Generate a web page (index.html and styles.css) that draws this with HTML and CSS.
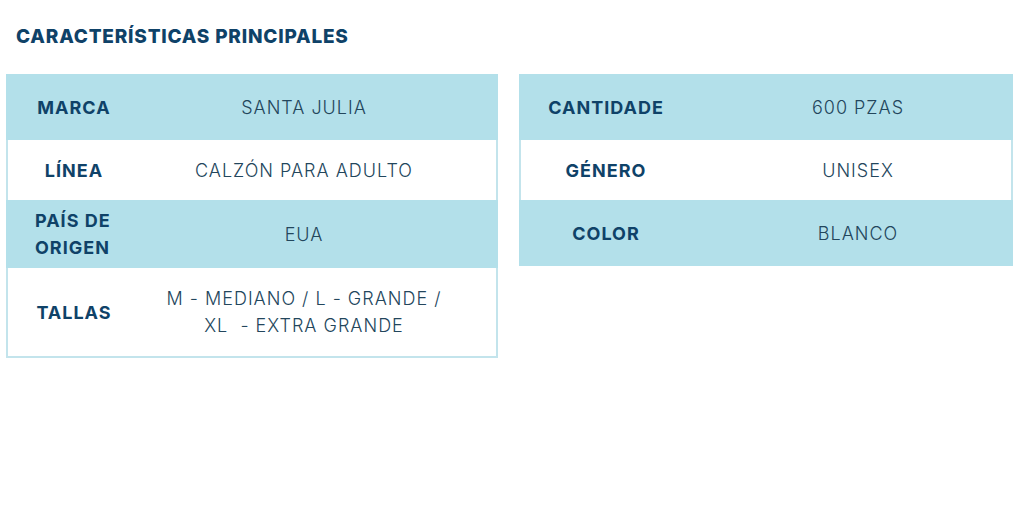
FILE: index.html
```html
<!DOCTYPE html>
<html lang="es">
<head>
<meta charset="utf-8">
<link rel="stylesheet" href="styles.css">
</head>
<body>
<div class="page">
  <h1 class="title">CARACTERÍSTICAS PRINCIPALES</h1>
  <div class="tables">
    <div class="spec spec-left">
      <div class="row blue r1"><div class="label">MARCA</div><div class="value">SANTA JULIA</div></div>
      <div class="row r2"><div class="label">LÍNEA</div><div class="value">CALZÓN PARA ADULTO</div></div>
      <div class="row blue r3"><div class="label label-left">PAÍS DE<br>ORIGEN</div><div class="value">EUA</div></div>
      <div class="row r4"><div class="label">TALLAS</div><div class="value">M - MEDIANO / L - GRANDE /<br>XL &nbsp;- EXTRA GRANDE</div></div>
    </div>
    <div class="spec spec-right">
      <div class="row blue r1"><div class="label">CANTIDADE</div><div class="value">600 PZAS</div></div>
      <div class="row r2"><div class="label">GÉNERO</div><div class="value">UNISEX</div></div>
      <div class="row blue r3b"><div class="label">COLOR</div><div class="value">BLANCO</div></div>
    </div>
  </div>
</div>
</body>
</html>
```

FILE: styles.css
```css
html, body {
  margin: 0;
  padding: 0;
  background: #ffffff;
}
body {
  font-family: "Inter", "DejaVu Sans", sans-serif;
  width: 1024px;
  height: 512px;
  overflow: hidden;
}
.page {
  padding: 26px 0 0 0;
}
.title {
  margin: 0 0 0 16px;
  font-size: 19px;
  line-height: 22px;
  font-weight: 800;
  letter-spacing: 0.8px;
  color: #0f4268;
}
.tables {
  display: flex;
  align-items: flex-start;
  gap: 21px;
  margin: 26px 0 0 6px;
}
.spec {
  border: 2px solid #c3e4ec;
  border-top: none;
  display: flex;
  flex-direction: column;
}
.spec-left { width: 488px; }
.spec-right { width: 490px; border-bottom: none; }
.row {
  display: grid;
  align-items: center;
  line-height: 27px;
  font-size: 18px;
  letter-spacing: 1px;
}
.spec-left .row { grid-template-columns: 132px 1fr; }
.spec-right .row { grid-template-columns: 170px 1fr; }
.blue { background: #b3e0ea; margin: 0 -2px; padding: 0 2px; }
.r1 { height: 66px; }
.r2 { height: 60px; }
.r3 { height: 68px; }
.r3b { height: 66px; }
.r4 { height: 88px; }
.label {
  font-weight: 700;
  color: #0f4268;
  text-align: center;
}
.label-left { text-align: left; padding-left: 27px; }
.value {
  font-weight: 300;
  color: #23465c;
  text-align: center;
}
.spec-left .value { padding-right: 28px; }
.spec-right .value { padding-left: 14px; }
```
